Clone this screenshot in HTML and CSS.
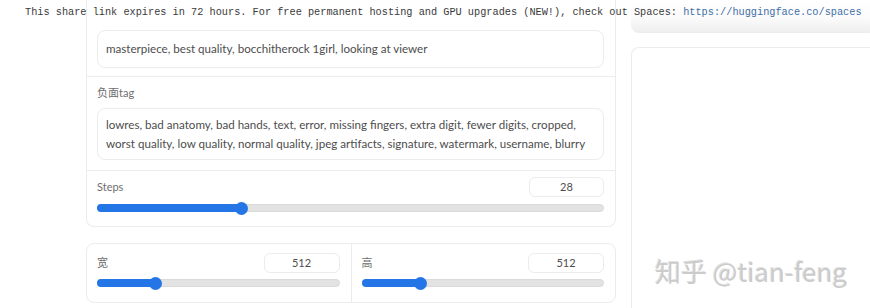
FILE: index.html
```html
<!DOCTYPE html>
<html lang="zh">
<head>
    <meta charset="UTF-8">
    <meta name="viewport" content="width=device-width, initial-scale=1.0">
    <title>Stable Diffusion</title>
    <link rel="stylesheet" href="styles.css">
</head>
<body>
<div class="share-note">This share link expires in 72 hours. For free permanent hosting and GPU upgrades (NEW!), check out Spaces: <a href="#">https://huggingface.co/spaces</a></div>

<div class="app">
    <div class="left-col">
        <div class="card prompts">
            <div class="block first">
                <div class="textbox one">masterpiece, best quality, bocchitherock 1girl, looking at viewer</div>
            </div>
            <div class="block">
                <div class="label">负面tag</div>
                <div class="textbox two">lowres, bad anatomy, bad hands, text, error, missing fingers, extra digit, fewer digits, cropped, worst quality, low quality, normal quality, jpeg artifacts, signature, watermark, username, blurry</div>
            </div>
            <div class="block slider-block">
                <div class="slider-head">
                    <span class="label">Steps</span>
                    <span class="num wide">28</span>
                </div>
                <div class="slider"><div class="fill" style="width:28.4%"></div><div class="thumb" style="left:28.4%"></div></div>
            </div>
        </div>

        <div class="card sizes">
            <div class="half">
                <div class="slider-head">
                    <span class="label">宽</span>
                    <span class="num">512</span>
                </div>
                <div class="slider"><div class="fill" style="width:24%"></div><div class="thumb" style="left:24%"></div></div>
            </div>
            <div class="half">
                <div class="slider-head">
                    <span class="label">高</span>
                    <span class="num">512</span>
                </div>
                <div class="slider"><div class="fill" style="width:24%"></div><div class="thumb" style="left:24%"></div></div>
            </div>
        </div>
    </div>

    <div class="right-col">
        <div class="top-btn"></div>
        <div class="gallery"></div>
    </div>
</div>

<div class="watermark">知乎 @tian-feng</div>
</body>
</html>
```

FILE: styles.css
```css
:root{
    --border:#ececec; --text:#4d4d4d; --label:#6e6e6e;
    --blue:#2476e6; --track:#e3e3e3;
}
html,body{margin:0;height:100%;}
body{
    font-family:Lato,"Noto Sans","Noto Sans CJK SC",sans-serif;
    background:#fff;color:var(--text);overflow:hidden;position:relative;
}
.share-note{
    position:absolute;top:5px;left:25px;z-index:2;
    font-family:"Liberation Mono",monospace;font-size:10.26px;line-height:14px;
    color:#3a3a3a;white-space:nowrap;
}
.share-note a{color:#3f6fa6;text-decoration:none;}

.app{display:flex;gap:14px;padding-left:86px;align-items:flex-start;}
.left-col{width:530px;flex:none;display:flex;flex-direction:column;gap:16px;}
.right-col{width:260px;flex:none;display:flex;flex-direction:column;gap:14px;padding-left:1px;}

.card{border:1px solid var(--border);border-radius:8px;background:#fff;}
.prompts{border-top:none;border-radius:0 0 8px 8px;}
.block{padding:0 11px 10px 10px;border-top:1px solid var(--border);}
.block.first{border-top:none;padding-top:30px;padding-bottom:8px;}
.label{font-size:11px;line-height:16px;color:var(--label);}
.block .label{display:block;padding:8px 0 7px;}
.textbox{
    border:1px solid var(--border);border-radius:8px;
    font-size:11.6px;line-height:19px;padding:0 8px;color:var(--text);
}
.textbox.one{padding-top:8px;padding-bottom:9px;}
.textbox.two{padding-top:6px;padding-bottom:6px;}

.slider-block{padding-top:6px;padding-bottom:14px;}
.slider-head{display:flex;justify-content:space-between;align-items:center;height:20px;}
.slider-block .slider-head .label{padding:0;display:inline;}
.num{
    width:74px;height:18px;border:1px solid var(--border);border-radius:6px;
    font-size:11px;line-height:18px;text-align:center;color:var(--text);
}
.num.wide{width:73px;}
.slider{position:relative;height:8px;margin-top:7px;background:var(--track);
    border:1px solid #dadada;border-radius:5px;box-sizing:border-box;}
.fill{height:100%;background:var(--blue);border-radius:5px 0 0 5px;margin:-1px 0 0 -1px;padding:1px 0 1px 1px;}
.thumb{position:absolute;top:50%;width:13px;height:13px;margin:-6.5px 0 0 -6.5px;
    border-radius:50%;background:var(--blue);}

.sizes{display:flex;height:60px;box-sizing:border-box;}
.half{flex:1;padding:8px 11px 0 10px;}
.half + .half{border-left:1px solid var(--border);}
.sizes .slider-head{height:22px;}
.sizes .slider{margin-top:5px;}

.top-btn{height:33px;margin-right:-20px;border-radius:0 0 0 8px;
    background:linear-gradient(#fff 0,#fbfbfb 55%,#ededed 100%);}
.gallery{height:320px;margin-right:-20px;border:1px solid var(--border);border-right:none;border-radius:8px 0 0 0;}

.watermark{
    position:absolute;left:655px;top:255px;
    font-family:"Noto Sans CJK SC","Noto Sans",sans-serif;font-size:26px;line-height:32px;
    color:#cbcbcb;text-shadow:1px 1px 0 #fff,-1px -1px 0 #e2e2e2;
}
```
